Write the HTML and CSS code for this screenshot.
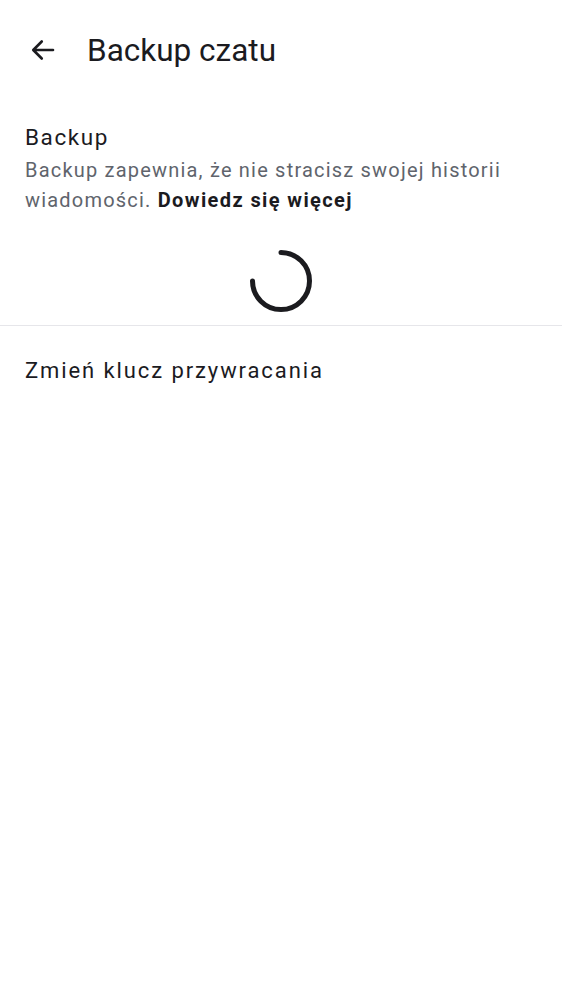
FILE: index.html
```html
<!DOCTYPE html>
<html lang="pl">
<head>
<meta charset="utf-8">
<link rel="stylesheet" href="styles.css">
</head>
<body>
<header class="topbar">
  <button class="back" aria-label="Wstecz">
    <svg width="30" height="30" viewBox="0 0 24 24"><path d="M20 12H4.8M11 5.2L4.2 12l6.8 6.8" fill="none" stroke="#1b1b1f" stroke-width="2.1" stroke-linecap="round" stroke-linejoin="round"/></svg>
  </button>
  <h1 class="title">Backup czatu</h1>
</header>
<section class="backup">
  <div class="label">Backup</div>
  <p class="desc">Backup zapewnia, że nie stracisz swojej historii wiadomości. <b>Dowiedz się więcej</b></p>
  <div class="spinner-wrap">
    <svg width="66" height="66" viewBox="0 0 66 66"><path d="M33 4.5A28.5 28.5 0 1 1 4.5 33" fill="none" stroke="#1b1b1f" stroke-width="5" stroke-linecap="round"/></svg>
  </div>
</section>
<div class="divider"></div>
<div class="row">Zmień klucz przywracania</div>
</body>
</html>
```
FILE: styles.css
```css
html, body { margin: 0; padding: 0; background: #fff; }
body { font-family: Roboto, "Noto Sans", sans-serif; color: #1b1b1f; }
.topbar { display: flex; align-items: center; height: 100px; padding-left: 25px; }
.back { border: 0; background: none; padding: 0; width: 36px; height: 36px; display: flex; align-items: center; justify-content: center; margin-right: 26px; }
.title { font-size: 31.5px; font-weight: 400; margin: 0; letter-spacing: 0; }
.backup { padding: 22px 25px 0; }
.label { font-size: 22.5px; line-height: 30px; letter-spacing: 1.6px; }
.desc { margin: 3px 0 0; font-size: 20px; line-height: 30px; color: #60646c; letter-spacing: 1.2px; }
.desc b { color: #1b1b1f; font-weight: 700; letter-spacing: 1.4px; }
.spinner-wrap { display: flex; justify-content: center; padding: 33px 0 11px; }
.divider { height: 1px; background: #e6e6ea; }
.row { padding: 30px 25px 29px; font-size: 22px; line-height: 30px; letter-spacing: 1.9px; }
```
